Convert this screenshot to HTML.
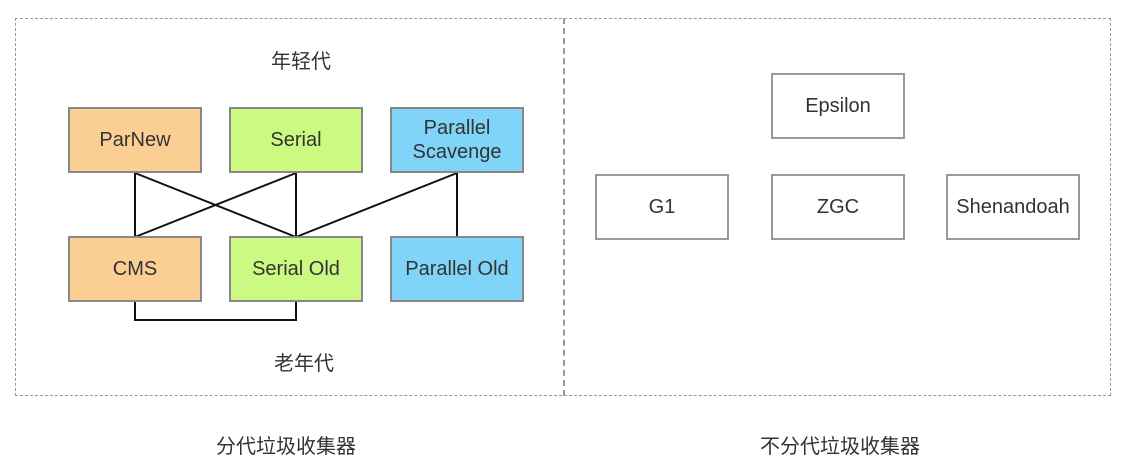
<!DOCTYPE html>
<html><head><meta charset="utf-8"><style>
body{margin:0;background:#fff;width:1134px;height:476px;overflow:hidden;font-family:"Liberation Sans","Noto Sans CJK SC",sans-serif;color:#333}
.b{position:absolute;box-sizing:border-box;border:2px solid #888;display:flex;align-items:center;justify-content:center;text-align:center;font-size:20px;line-height:24px;width:134px;height:66px}
.o{background:#fbce93}.g{background:#ccf981}.c{background:#80d4f7}.w{background:#fff;border-color:#999}
.t{position:absolute;font-size:20px;text-align:center;width:200px}
</style></head><body>
<div style="position:absolute;left:15px;top:18px;width:1096px;height:378px;box-sizing:border-box;border:1px dashed #999"></div>
<div style="position:absolute;left:563px;top:18px;height:378px;border-left:2px dashed #999"></div>
<svg style="position:absolute;left:0;top:0" width="1134" height="476"><g stroke="#111" stroke-width="2" fill="none">
<line x1="135" y1="173" x2="135" y2="237"/><line x1="135" y1="173" x2="296" y2="237"/>
<line x1="296" y1="173" x2="135" y2="237"/><line x1="296" y1="173" x2="296" y2="237"/>
<line x1="457" y1="173" x2="296" y2="237"/><line x1="457" y1="173" x2="457" y2="237"/>
<polyline points="135,302 135,320 296,320 296,302"/></g></svg>
<div class="t" style="left:201px;top:45px">年轻代</div>
<div class="t" style="left:204px;top:347px">老年代</div>
<div class="b o" style="left:68px;top:107px">ParNew</div>
<div class="b g" style="left:229px;top:107px">Serial</div>
<div class="b c" style="left:390px;top:107px">Parallel<br>Scavenge</div>
<div class="b o" style="left:68px;top:236px">CMS</div>
<div class="b g" style="left:229px;top:236px">Serial Old</div>
<div class="b c" style="left:390px;top:236px">Parallel Old</div>
<div class="b w" style="left:771px;top:73px">Epsilon</div>
<div class="b w" style="left:595px;top:174px">G1</div>
<div class="b w" style="left:771px;top:174px">ZGC</div>
<div class="b w" style="left:946px;top:174px">Shenandoah</div>
<div class="t" style="left:186px;top:430px">分代垃圾收集器</div>
<div class="t" style="left:740px;top:430px">不分代垃圾收集器</div>
</body></html>
